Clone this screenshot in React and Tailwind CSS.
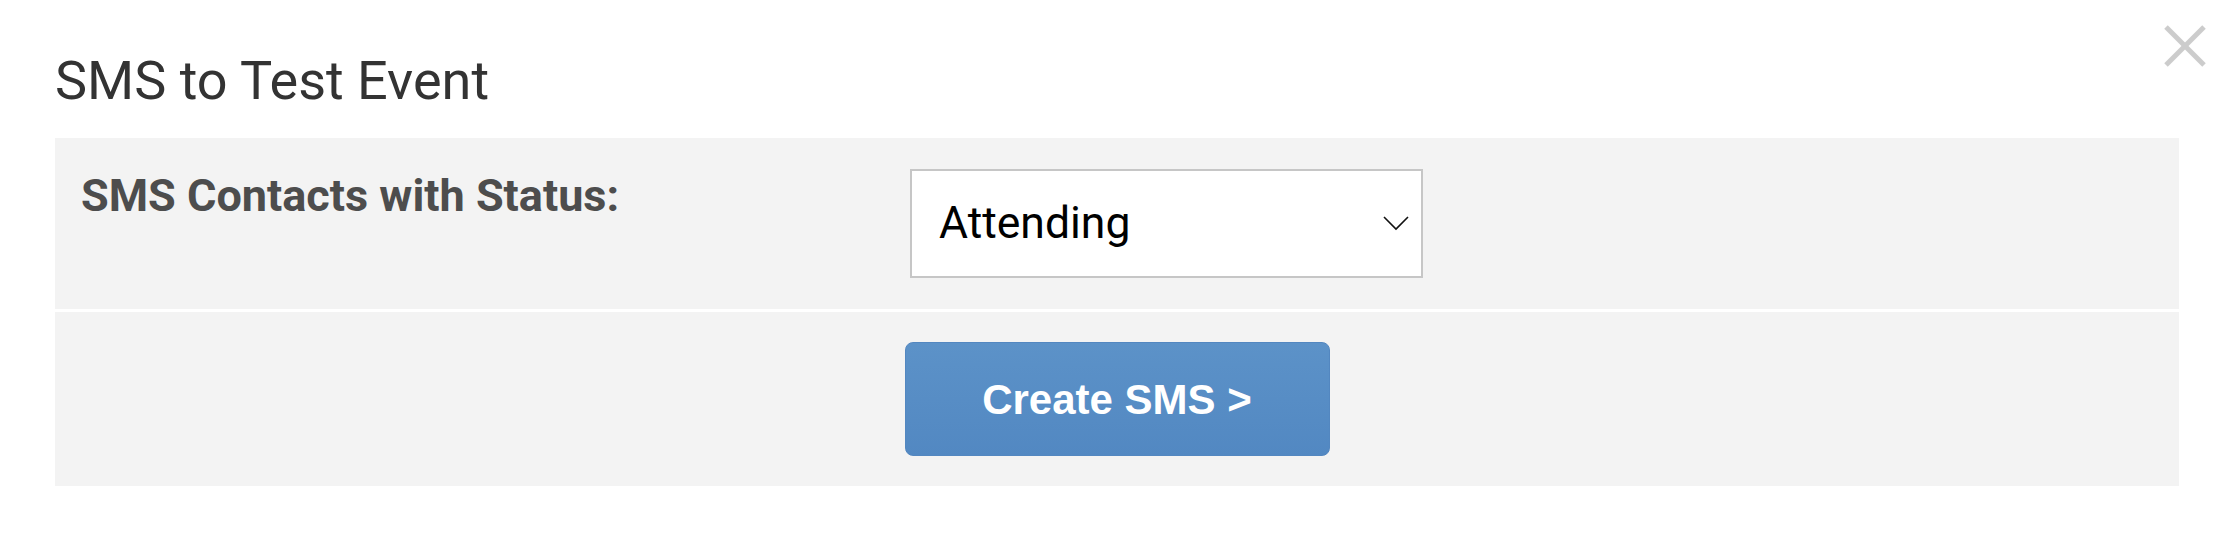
import React from "react";

export default function App() {
  return (
    <div className="relative w-full h-[544px] bg-white pl-[55px] pr-[57px] pt-[40px]" style={{ fontFamily: "Roboto, 'Liberation Sans', sans-serif" }}>
      <button className="absolute right-[29px] top-[24px] w-[44px] h-[44px] p-0 bg-transparent border-0">
        <svg width="44" height="44" viewBox="0 0 44 44">
          <line x1="3" y1="3" x2="41" y2="41" stroke="#cccccc" strokeWidth="5" />
          <line x1="41" y1="3" x2="3" y2="41" stroke="#cccccc" strokeWidth="5" />
        </svg>
      </button>

      <h1 className="text-[54px] font-normal text-[#333333] leading-normal m-0">SMS to Test Event</h1>

      <div className="mt-[17px] flex flex-col gap-[3px]">
        <div className="bg-[#f3f3f3] h-[171px] pt-[31px] pl-[26px] grid grid-cols-[829px_513px]">
          <div className="mt-[2px] text-[45px] leading-[50px] font-bold text-[#4d4d4d]">SMS Contacts with Status:</div>
          <div className="w-[513px] h-[109px] bg-white border-2 border-[#c6c6c6] flex items-center justify-between pl-[27px] pr-[12px]">
            <span className="text-[44.5px] text-black leading-none">Attending</span>
            <svg width="26" height="16" viewBox="0 0 26 16" className="mt-[-2px]">
              <polyline points="1,2 13,14 25,2" fill="none" stroke="#111" strokeWidth="1.6" />
            </svg>
          </div>
        </div>
        <div className="bg-[#f3f3f3] h-[174px] flex items-center justify-center">
          <button
            className="w-[425px] h-[114px] rounded-[8px] bg-gradient-to-b from-[#5c92c8] to-[#5288c2] border border-[#5387c0] text-white text-[42px] font-bold flex items-center justify-center"
            style={{ fontFamily: "'Liberation Sans', Arial, sans-serif" }}
          >
            Create SMS &gt;
          </button>
        </div>
      </div>
    </div>
  );
}
